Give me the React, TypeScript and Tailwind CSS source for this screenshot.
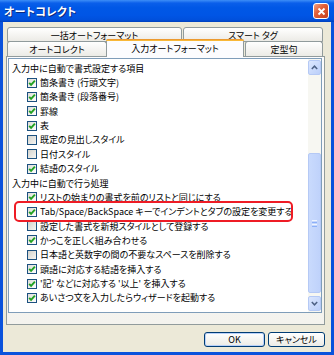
import React from "react";

const Box = ({ checked }: { checked: boolean }) => (
  <span
    className={
      "w-[10px] h-[10px] border border-[#1C5180] flex items-center justify-center shrink-0 " +
      (checked
        ? "bg-[linear-gradient(135deg,#DCDCD7,#FFFFFF)]"
        : "bg-[linear-gradient(135deg,#D2D2CC,#F6F6F3)]")
    }
  >
    {checked && (
      <svg width="8" height="8" viewBox="0 0 8 8">
        <path d="M1.2 3.8 L3.1 5.9 L6.9 1.6" fill="none" stroke="#21A121" strokeWidth="1.9" />
      </svg>
    )}
  </span>
);

type Row = { t: string; h?: boolean; c?: boolean };

const rows: Row[] = [
  { t: "入力中に自動で書式設定する項目", h: true },
  { t: "箇条書き (行頭文字)", c: true },
  { t: "箇条書き (段落番号)", c: true },
  { t: "罫線", c: true },
  { t: "表", c: true },
  { t: "既定の見出しスタイル", c: false },
  { t: "日付スタイル", c: false },
  { t: "結語のスタイル", c: true },
  { t: "入力中に自動で行う処理", h: true },
  { t: "リストの始まりの書式を前のリストと同じにする", c: true },
  { t: "Tab/Space/BackSpace キーでインデントとタブの設定を変更する", c: true },
  { t: "設定した書式を新規スタイルとして登録する", c: false },
  { t: "かっこを正しく組み合わせる", c: true },
  { t: "日本語と英数字の間の不要なスペースを削除する", c: false },
  { t: "頭語に対応する結語を挿入する", c: true },
  { t: "'記' などに対応する '以上' を挿入する", c: true },
  { t: "あいさつ文を入力したらウィザードを起動する", c: true },
];

const Arrow = ({ up }: { up: boolean }) => (
  <svg width="7" height="5" viewBox="0 0 7 5">
    <path
      d={up ? "M0.8 4 L3.5 1.2 L6.2 4" : "M0.8 1 L3.5 3.8 L6.2 1"}
      fill="none"
      stroke="#4D6185"
      strokeWidth="1.5"
    />
  </svg>
);

const ScrollBtn = ({ up }: { up: boolean }) => (
  <div className="h-[15px] rounded-[2px] border border-[#B5C9F5] bg-[linear-gradient(135deg,#DCE7FE,#BBCFFA)] flex items-center justify-center">
    <Arrow up={up} />
  </div>
);

export default function App() {
  return (
    <div className="w-[334px] h-[355px] flex flex-col overflow-hidden bg-[#0A52DC] text-black font-['Noto_Sans_CJK_JP',sans-serif] [font-feature-settings:'palt']">
      {/* title bar */}
      <div className="h-[22px] shrink-0 flex items-center pl-[4px] pr-[5px] bg-[linear-gradient(to_bottom,#3D8EF7_0%,#0A5FEA_14%,#0058E6_35%,#0055E5_70%,#0050DC_90%,#0040BC_100%)]">
        <span className="flex-1 text-white font-bold text-[11px] leading-none tracking-[0.3px] [text-shadow:1px_1px_0_#0A2A80]">
          オートコレクト
        </span>
        <div className="w-[16px] h-[16px] rounded-[3px] border border-white bg-[linear-gradient(135deg,#F2A283_0%,#E2603A_40%,#C6401C_100%)] flex items-center justify-center">
          <svg width="9" height="9" viewBox="0 0 9 9">
            <path d="M1.5 1.5 L7.5 7.5 M7.5 1.5 L1.5 7.5" stroke="white" strokeWidth="1.8" />
          </svg>
        </div>
      </div>

      {/* body */}
      <div className="flex-1 mx-[3px] mb-[3px] bg-[#ECE9D8] flex flex-col pl-[3px] pr-[6px] pt-[5px]">
        {/* tabs */}
        <div className="flex flex-col pl-[1px] pr-[2px] text-[9px] leading-none">
          <div className="flex gap-[1px] h-[14px]">
            <div className="w-[175px] h-[15px] border border-[#919B9C] rounded-t-[3px] bg-[linear-gradient(to_bottom,#FFFFFF,#ECEBE6)] flex justify-center pt-[3px]">
              一括オートフォーマット
            </div>
            <div className="flex-1 h-[15px] border border-[#919B9C] rounded-t-[3px] bg-[linear-gradient(to_bottom,#FFFFFF,#ECEBE6)] flex justify-center pt-[3px]">
              スマート タグ
            </div>
          </div>
          <div className="flex items-end h-[15px] relative">
            <div className="w-[100px] h-[15px] border border-b-0 border-[#919B9C] rounded-t-[3px] bg-[linear-gradient(to_bottom,#FFFFFF,#ECEBE6)] flex justify-center pt-[3px]">
              オートコレクト
            </div>
            <div className="relative z-10 w-[138px] h-[18px] -mb-[1px] -ml-[1px] border border-b-0 border-[#919B9C] border-t-0 rounded-t-[3px] bg-[#FCFCFE] flex flex-col items-center">
              <div className="w-[calc(100%+2px)] -mx-[1px] h-[2px] rounded-t-[3px] bg-[linear-gradient(to_bottom,#E68B2C,#FFC73C)]" />
              <div className="pt-[3px]">入力オートフォーマット</div>
            </div>
            <div className="flex-1 h-[15px] ml-[1px] border border-b-0 border-[#919B9C] rounded-t-[3px] bg-[linear-gradient(to_bottom,#FFFFFF,#ECEBE6)] flex justify-center pt-[3px]">
              定型句
            </div>
          </div>
        </div>

        {/* panel */}
        <div className="h-[269px] shrink-0 border border-[#919B9C] bg-[linear-gradient(to_bottom,#FCFCFE,#F4F3EE)] pl-[1px] pr-[2px] pt-[1px]">
          <div className="relative h-[255px] border border-[#7F9DB9] bg-white flex">
            <div className="flex-1 pt-[2px] text-[9px]">
              {rows.map((r, i) =>
                r.h ? (
                  <div key={i} className="h-[14.36px] flex items-center pl-[3px] whitespace-nowrap leading-none">
                    {r.t}
                  </div>
                ) : (
                  <div key={i} className="h-[14.36px] flex items-center pl-[18px] gap-[3px] whitespace-nowrap leading-none">
                    <Box checked={!!r.c} />
                    <span>{r.t}</span>
                  </div>
                )
              )}
            </div>
            {/* scrollbar */}
            <div className="w-[13px] flex flex-col bg-[#F7F7F2] py-[1px]">
              <ScrollBtn up={true} />
              <div className="flex-1 flex flex-col">
                <div className="mt-[78px] h-[140px] rounded-[2px] border border-[#B5C9F5] bg-[linear-gradient(to_right,#C9DAFD,#BFD2FB)] flex flex-col items-center justify-center gap-[1px]">
                  <div className="w-[5px] h-[1px] bg-[#EEF4FE]" />
                  <div className="w-[5px] h-[1px] bg-[#8CB0F8]" />
                  <div className="w-[5px] h-[1px] bg-[#EEF4FE]" />
                  <div className="w-[5px] h-[1px] bg-[#8CB0F8]" />
                </div>
              </div>
              <ScrollBtn up={false} />
            </div>
            {/* red highlight */}
            <div className="absolute left-[5px] top-[142px] w-[279px] h-[21px] border-2 border-[#EE1C25] rounded-[5px]" />
          </div>
        </div>

        {/* buttons */}
        <div className="flex justify-end gap-[3px] mt-[7px] text-[9px] leading-none">
          <div className="w-[61px] h-[15px] rounded-[3px] border border-[#003C74] bg-[linear-gradient(to_bottom,#FFFFFF,#ECEBE6)] shadow-[inset_0_0_0_1px_#B9D1FA] flex items-center justify-center">
            OK
          </div>
          <div className="w-[57px] h-[15px] rounded-[3px] border border-[#003C74] bg-[linear-gradient(to_bottom,#FFFFFF,#ECEBE6)] flex items-center justify-center">
            キャンセル
          </div>
        </div>
      </div>
    </div>
  );
}
